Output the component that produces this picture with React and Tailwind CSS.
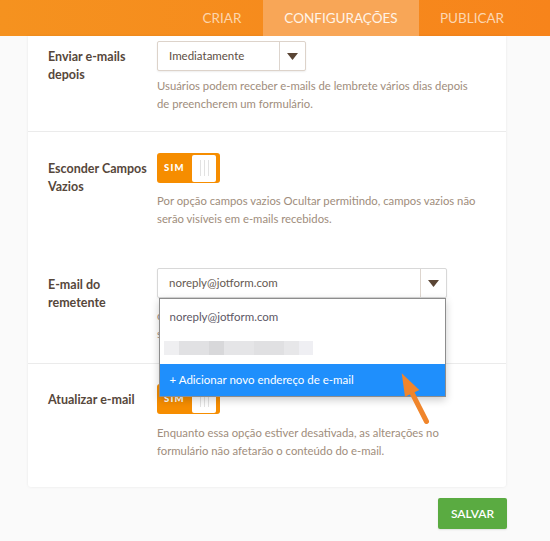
import React from "react";

const Arrow = () => (
  <div className="flex w-[26px] items-center justify-center border-l border-[#ddd5ce]">
    <svg width="11" height="7" viewBox="0 0 11 7">
      <path d="M0 0 H11 L5.5 7 Z" fill="#5a4535" />
    </svg>
  </div>
);

const Toggle = () => (
  <div className="flex h-[30px] w-[63px] items-center justify-between rounded-[3px] bg-[#f68d00] pl-[7px] pr-[4px]">
    <span className="text-[9.5px] font-black tracking-[1.2px] text-white">SIM</span>
    <div className="flex h-[27px] w-[24px] items-center justify-center gap-[3px] rounded-[2px] bg-white">
      <div className="h-[16px] w-px bg-[#e2e2e2]" />
      <div className="h-[16px] w-px bg-[#e2e2e2]" />
      <div className="h-[16px] w-px bg-[#e2e2e2]" />
    </div>
  </div>
);

const Label = ({ children, className = "mt-[7px]" }) => (
  <div className={"w-[109px] shrink-0 whitespace-nowrap text-[12.5px] font-bold leading-[18px] text-[#56473b] " + className}>
    {children}
  </div>
);

const Desc = ({ children, className = "" }) => (
  <div className={"whitespace-nowrap text-[11.3px] leading-[18px] text-[#a08d7c] " + className}>
    {children}
  </div>
);

export default function App() {
  return (
    <div className="relative h-[541px] w-[550px] overflow-hidden bg-[#fafafa] font-['Lato',sans-serif]">
      {/* Header */}
      <header className="flex h-[36px] justify-end bg-gradient-to-r from-[#f5921f] to-[#f7841b] pr-[25px] text-[13.5px]">
        <div className="flex w-[82px] items-center justify-center text-[#fcd5ac]">CRIAR</div>
        <div className="flex w-[156px] items-center justify-center bg-[#f8a657] text-[#fff3e6]">
          CONFIGURAÇÕES
        </div>
        <div className="flex w-[106px] items-center justify-center text-[#fcd6b2]">PUBLICAR</div>
      </header>

      {/* Card */}
      <div className="ml-[28px] w-[478px] rounded-b-[3px] bg-white shadow-[0_0_3px_rgba(0,0,0,0.08)]">
        {/* Row 1 */}
        <div className="flex border-b border-[#ebebeb] pb-[18px] pl-[20px] pt-[5px]">
          <Label>
            Enviar e-mails
            <br />
            depois
          </Label>
          <div className="flex flex-col">
            <div className="flex h-[30px] w-[149px] rounded-[2px] border border-[#ddd3ca] bg-white shadow-[0_1px_2px_rgba(0,0,0,0.07)]">
              <div className="flex flex-1 items-center pl-[11px] text-[11.5px] text-[#5e4f44]">Imediatamente</div>
              <Arrow />
            </div>
            <Desc className="mt-[6px]">
              Usuários podem receber e-mails de lembrete vários dias depois
              <br />
              de preencherem um formulário.
            </Desc>
          </div>
        </div>

        {/* Row 2 */}
        <div className="flex pb-[20px] pl-[20px] pt-[21px]">
          <Label>
            Esconder Campos
            <br />
            Vazios
          </Label>
          <div className="flex flex-col">
            <Toggle />
            <Desc className="mt-[9px]">
              Por opção campos vazios Ocultar permitindo, campos vazios não
              <br />
              serão visíveis em e-mails recebidos.
            </Desc>
          </div>
        </div>

        {/* Row 3 */}
        <div className="flex border-b border-[#ebebeb] pb-[20px] pl-[20px] pt-[20px]">
          <Label className="mt-[8px]">
            E-mail do
            <br />
            remetente
          </Label>
          <div className="relative flex flex-col">
            <div className="flex h-[30px] w-[290px] rounded-[2px] border border-[#d8d8d8] bg-white shadow-[0_1px_2px_rgba(0,0,0,0.07)]">
              <div className="flex flex-1 items-center pl-[11px] text-[11.5px] text-[#665a52]">noreply@jotform.com</div>
              <Arrow />
            </div>
            <Desc className="mt-[9px]">
              c
              <br />
              s
            </Desc>
            {/* Dropdown overlay */}
            <div className="absolute left-[1.5px] top-[30px] z-10 w-[287px] border border-[#8d8d8d] bg-white shadow-[0_3px_8px_rgba(0,0,0,0.2)]">
              <div className="flex h-[33px] items-center pl-[10px] pt-[2px] text-[11.5px] text-[#5d5866]">noreply@jotform.com</div>
              <div className="flex h-[32px] items-center pl-[4px]">
                <div className="flex h-[14px] blur-[0.6px]">
                  <div className="w-[15px] bg-[#efeff1]" />
                  <div className="w-[30px] bg-[#e1e1e3]" />
                  <div className="w-[15px] bg-[#d8d8da]" />
                  <div className="w-[30px] bg-[#e5e5e7]" />
                  <div className="w-[30px] bg-[#e0e0e2]" />
                  <div className="w-[15px] bg-[#e7e7e9]" />
                  <div className="w-[14px] bg-[#efeff3]" />
                </div>
              </div>
              <div className="flex h-[32px] items-center bg-[#1f8ffc] pl-[10px] text-[11.5px] text-white">
                + Adicionar novo endereço de e-mail
              </div>
            </div>
          </div>
        </div>

        {/* Row 4 */}
        <div className="flex pb-[27px] pl-[20px] pt-[20px]">
          <Label>Atualizar e-mail</Label>
          <div className="flex flex-col">
            <Toggle />
            <Desc className="mt-[10px]">
              Enquanto essa opção estiver desativada, as alterações no
              <br />
              formulário não afetarão o conteúdo do e-mail.
            </Desc>
          </div>
        </div>
      </div>

      {/* Save */}
      <div className="mt-[11px] flex justify-end pr-[43px]">
        <button className="flex h-[31px] w-[69px] items-center justify-center rounded-[2px] bg-[#5aab41] text-[12px] font-semibold text-white shadow-[0_1px_2px_rgba(0,0,0,0.1)]">
          SALVAR
        </button>
      </div>

      {/* Annotation arrow */}
      <svg className="absolute left-[390px] top-[365px] z-20" width="50" height="65" viewBox="0 0 50 65">
        <line x1="36.5" y1="56.5" x2="19" y2="22" stroke="#f0852b" strokeWidth="5" strokeLinecap="round" />
        <polygon points="11.7,8.3 29.3,25 15,31.7" fill="#f0852b" />
      </svg>
    </div>
  );
}
